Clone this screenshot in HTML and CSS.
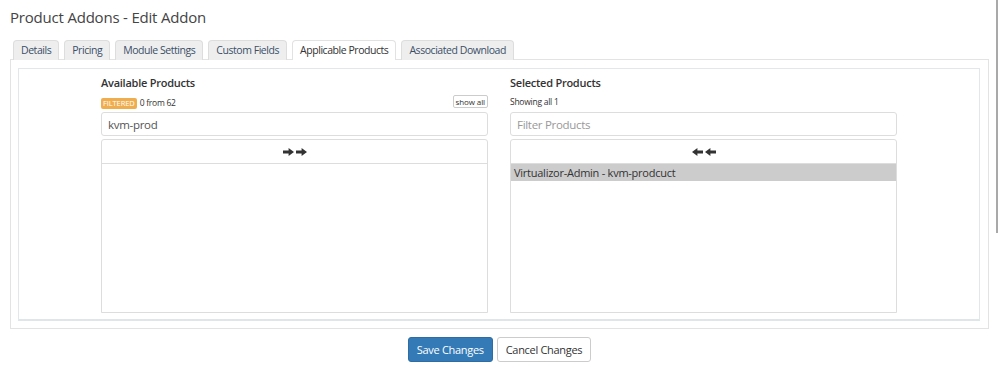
FILE: index.html
```html
<!DOCTYPE html>
<html>
<head>
<meta charset="utf-8">
<title>Product Addons - Edit Addon</title>
<link rel="stylesheet" href="styles.css">
</head>
<body>
<div class="page">
  <h1 class="title">Product Addons - Edit Addon</h1>
  <ul class="tabs">
    <li class="tab">Details</li>
    <li class="tab">Pricing</li>
    <li class="tab">Module Settings</li>
    <li class="tab">Custom Fields</li>
    <li class="tab active">Applicable Products</li>
    <li class="tab">Associated Download</li>
  </ul>
  <div class="tabpane">
    <div class="panel">
      <div class="duallist">
        <div class="col">
          <div class="col-title">Available Products</div>
          <div class="info-row">
            <span class="badge">FILTERED</span>
            <span class="info">0 from 62</span>
            <span class="show-all">show all</span>
          </div>
          <input class="filter" type="text" value="kvm-prod">
          <div class="listbox">
            <div class="move-all">
              <svg class="arrow" viewBox="0 0 11 8" width="11" height="8"><path d="M0 2.6H5.6V0L11 4L5.6 8V5.4H0Z"/></svg>
              <svg class="arrow" viewBox="0 0 11 8" width="11" height="8"><path d="M0 2.6H5.6V0L11 4L5.6 8V5.4H0Z"/></svg>
            </div>
            <div class="options"></div>
          </div>
        </div>
        <div class="col">
          <div class="col-title">Selected Products</div>
          <div class="info-row">
            <span class="info info-plain">Showing all 1</span>
          </div>
          <input class="filter" type="text" placeholder="Filter Products">
          <div class="listbox">
            <div class="move-all">
              <svg class="arrow" viewBox="0 0 11 8" width="11" height="8"><path d="M11 2.6H5.4V0L0 4L5.4 8V5.4H11Z"/></svg>
              <svg class="arrow" viewBox="0 0 11 8" width="11" height="8"><path d="M11 2.6H5.4V0L0 4L5.4 8V5.4H11Z"/></svg>
            </div>
            <div class="options">
              <div class="option selected">Virtualizor-Admin - kvm-prodcuct</div>
            </div>
          </div>
        </div>
      </div>
    </div>
  </div>
  <div class="actions">
    <button class="btn btn-primary" type="button">Save Changes</button>
    <button class="btn btn-default" type="button">Cancel Changes</button>
  </div>
</div>
<div class="scrollbar"></div>
</body>
</html>
```

FILE: styles.css
```css
html, body {
  margin: 0;
  padding: 0;
  background: #fff;
}

body {
  font-family: "Open Sans", "DejaVu Sans", sans-serif;
  color: #333;
}

.page {
  padding: 0 11px 0 10px;
}

.title {
  margin: 7px 0 13px;
  font-size: 15px;
  letter-spacing: -0.2px;
  line-height: 20px;
  font-weight: 400;
  color: #444;
}

.tabs {
  display: flex;
  gap: 5px;
  list-style: none;
  margin: 0 0 -1px;
  padding: 0 0 0 3px;
  position: relative;
  z-index: 1;
}

.tab {
  font-size: 10.5px;
  letter-spacing: -0.45px;
  line-height: 14px;
  padding: 2px 7px 3px;
  background: #eee;
  border: 1px solid #ddd;
  border-bottom: none;
  border-radius: 4px 4px 0 0;
  color: #3b4f68;
}

.tab.active {
  background: #fff;
  color: #333;
  border-color: #e2e2e2;
}

.tabpane {
  border: 1px solid #e3e3e3;
  padding: 8px 8px 7px 7px;
}

.panel {
  border: 1px solid #e2e7ea;
  border-bottom: 2px solid #dfe5e8;
  padding: 6px 0;
}

.duallist {
  display: flex;
  justify-content: center;
  gap: 22px;
}

.col {
  width: 387px;
  display: flex;
  flex-direction: column;
}

.col-title {
  font-size: 11px;
  letter-spacing: -0.25px;
  line-height: 16px;
  font-weight: 600;
  color: #333;
}

.info-row {
  display: flex;
  align-items: flex-start;
  height: 15px;
  margin-top: 4px;
}

.badge {
  margin-top: 3px;
  height: 11px;
  line-height: 11px;
  font-size: 7.5px;
  letter-spacing: -0.1px;
  padding: 0 2px;
  background: #f0ad4e;
  color: #fff;
  border-radius: 2px;
}

.info {
  margin-top: 2px;
  margin-left: 3px;
  font-size: 8.5px;
  letter-spacing: -0.25px;
  line-height: 11px;
  color: #333;
}

.info-plain {
  margin-left: 0;
  margin-top: 1px;
}

.show-all {
  margin-left: auto;
  height: 13px;
  box-sizing: border-box;
  border: 1px solid #ccc;
  border-radius: 2px;
  font-size: 8px;
  letter-spacing: -0.1px;
  line-height: 11px;
  padding: 0 2px;
  color: #333;
  background: #fff;
}

.filter {
  box-sizing: border-box;
  margin: 2px 0 0;
  height: 24px;
  width: 100%;
  border: 1px solid #ddd;
  border-radius: 3px;
  padding: 0 6px;
  font-family: inherit;
  font-size: 11.5px;
  letter-spacing: -0.3px;
  color: #555;
  outline: none;
}

.filter::placeholder {
  color: #999;
}

.listbox {
  margin-top: 3px;
  height: 174px;
  box-sizing: border-box;
  border: 1px solid #ddd;
  border-radius: 3px 3px 0 0;
  display: flex;
  flex-direction: column;
}

.move-all {
  height: 23px;
  border-bottom: 1px solid #ddd;
  display: flex;
  align-items: center;
  justify-content: center;
  gap: 2px;
}

.arrow {
  display: block;
  fill: #333;
}

.options {
  flex: 1;
}

.option {
  font-size: 11px;
  letter-spacing: -0.25px;
  line-height: 17px;
  padding-left: 3px;
  color: #333;
}

.option.selected {
  background: #cccccc;
}

.actions {
  display: flex;
  justify-content: center;
  gap: 4px;
  margin-top: 8px;
}

.btn {
  height: 25px;
  padding: 0 8px;
  font-family: inherit;
  font-size: 11px;
  letter-spacing: -0.3px;
  border-radius: 3px;
  border: 1px solid #ccc;
  cursor: pointer;
}

.btn-primary {
  background: #337ab7;
  border-color: #2e6da4;
  color: #fff;
}

.btn-default {
  background: #fff;
  color: #333;
}

.scrollbar {
  position: fixed;
  top: 0;
  right: 2px;
  width: 2px;
  height: 233px;
  background: #a9a9a9;
}
```
